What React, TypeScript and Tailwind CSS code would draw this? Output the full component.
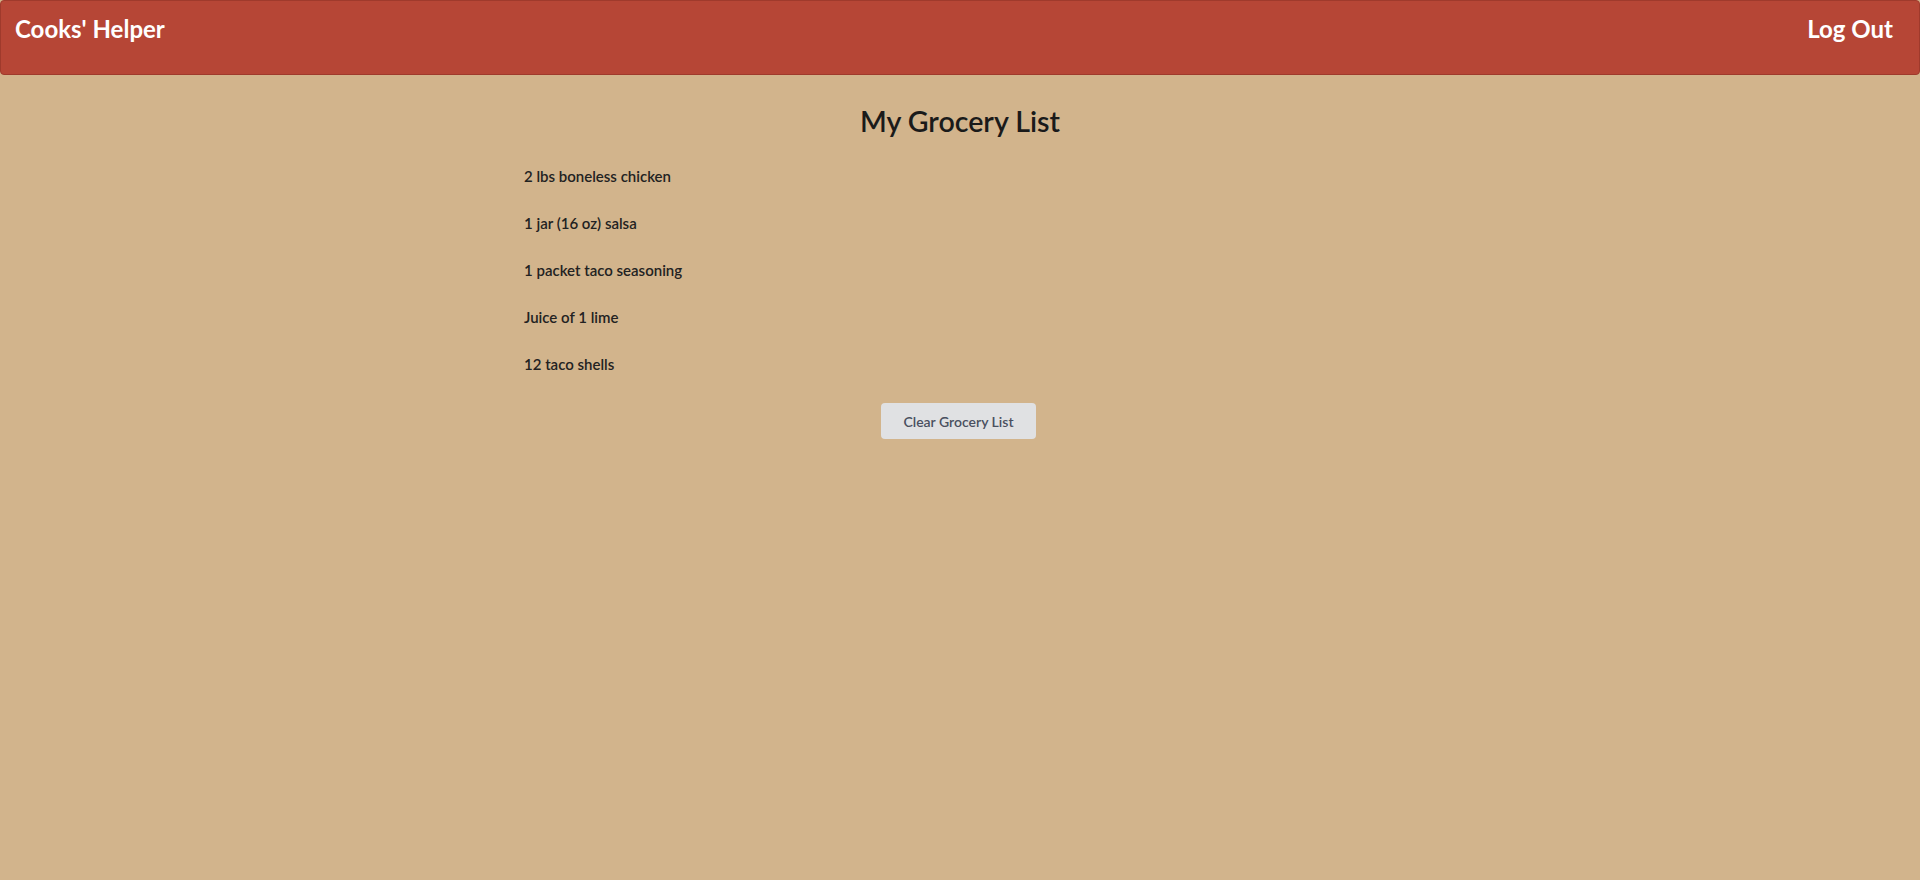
import React from "react";

const items = [
  "2 lbs boneless chicken",
  "1 jar (16 oz) salsa",
  "1 packet taco seasoning",
  "Juice of 1 lime",
  "12 taco shells",
];

export default function App() {
  return (
    <div
      className="min-h-[880px] w-full bg-[#d2b48c]"
      style={{ fontFamily: "Lato, 'Noto Sans', sans-serif" }}
    >
      <header className="flex h-[75px] items-start justify-between rounded-[4px] border border-[#9f3a2c] bg-[#b64636] pl-[14px] pr-[26px] pt-[16px] text-white">
        <span className="text-[24px] font-bold leading-none">Cooks' Helper</span>
        <span className="text-[24px] font-bold leading-none">Log Out</span>
      </header>
      <main className="mx-auto w-[880px] pt-[29px]">
        <h1 className="text-center text-[28.6px] font-semibold leading-[1.2] text-[#1a1a1a]">
          My Grocery List
        </h1>
        <ul className="mt-[28px] flex flex-col gap-[27px] pl-[4px]">
          {items.map((it) => (
            <li key={it} className="text-[15px] font-semibold leading-5 text-[#222]">
              {it}
            </li>
          ))}
        </ul>
        <div className="mt-[29px] flex justify-center">
          <button className="ml-[-3px] h-[36px] w-[155px] rounded-[4px] bg-[#e0e1e3] text-[14px] font-semibold text-[#4a5060]">
            Clear Grocery List
          </button>
        </div>
      </main>
    </div>
  );
}
